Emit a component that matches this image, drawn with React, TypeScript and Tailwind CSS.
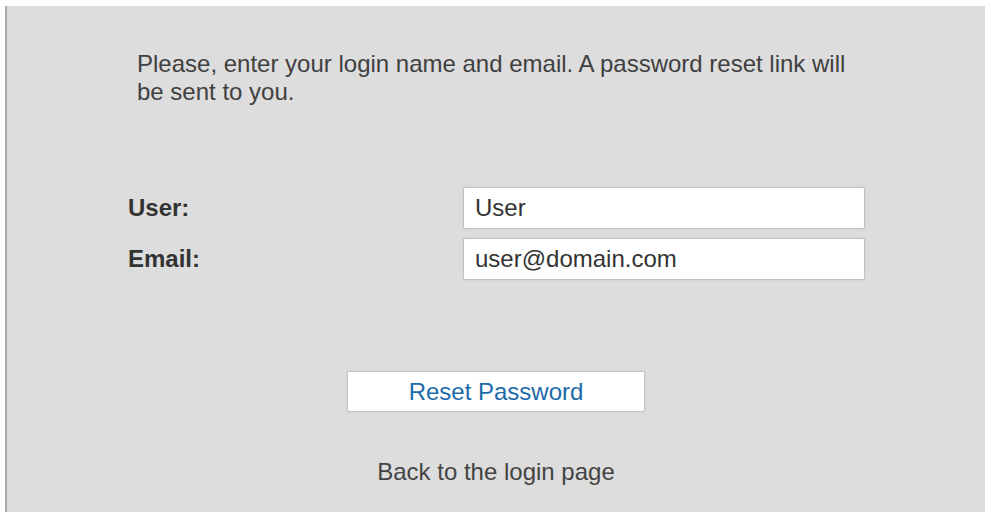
import React from "react";

export default function App() {
  return (
    <div className="min-h-[512px] w-full bg-white pt-[6px] pl-[5px]" style={{}}>
      <div
        className="min-h-[506px] border-l-2 border-[#a9a9a9] bg-[#dddddd] text-[24px] leading-[27.6px] text-[#404040]"
        style={{ fontFamily: '"Liberation Sans", Arial, sans-serif' }}
      >
        <p className="ml-[130px] w-[730px] pt-[44px]">
          Please, enter your login name and email. A password reset link will be sent to you.
        </p>

        <div className="mt-[82px] flex flex-col gap-[9px] pl-[121px]">
          <div className="flex items-center">
            <label className="w-[335px] font-bold text-[#333333]">User:</label>
            <input
              defaultValue="User"
              className="h-[42px] w-[402px] rounded-[2px] border border-[#c2c2c2] bg-white px-[11px] text-[#333333] shadow-[0_0_2px_rgba(0,0,0,0.12)] outline-none"
            />
          </div>
          <div className="flex items-center">
            <label className="w-[335px] font-bold text-[#333333]">Email:</label>
            <input
              defaultValue="user@domain.com"
              className="h-[42px] w-[402px] rounded-[2px] border border-[#c2c2c2] bg-white px-[11px] text-[#333333] shadow-[0_0_2px_rgba(0,0,0,0.12)] outline-none"
            />
          </div>
        </div>

        <div className="mt-[91px] flex justify-center">
          <button className="h-[41px] w-[298px] rounded-[2px] border border-[#c2c2c2] bg-white text-[#1d6aa8] shadow-[0_0_2px_rgba(0,0,0,0.12)]">
            Reset Password
          </button>
        </div>

        <div className="mt-[46px] flex justify-center">
          <a href="#" className="text-[#444444]">
            Back to the login page
          </a>
        </div>
      </div>
    </div>
  );
}
